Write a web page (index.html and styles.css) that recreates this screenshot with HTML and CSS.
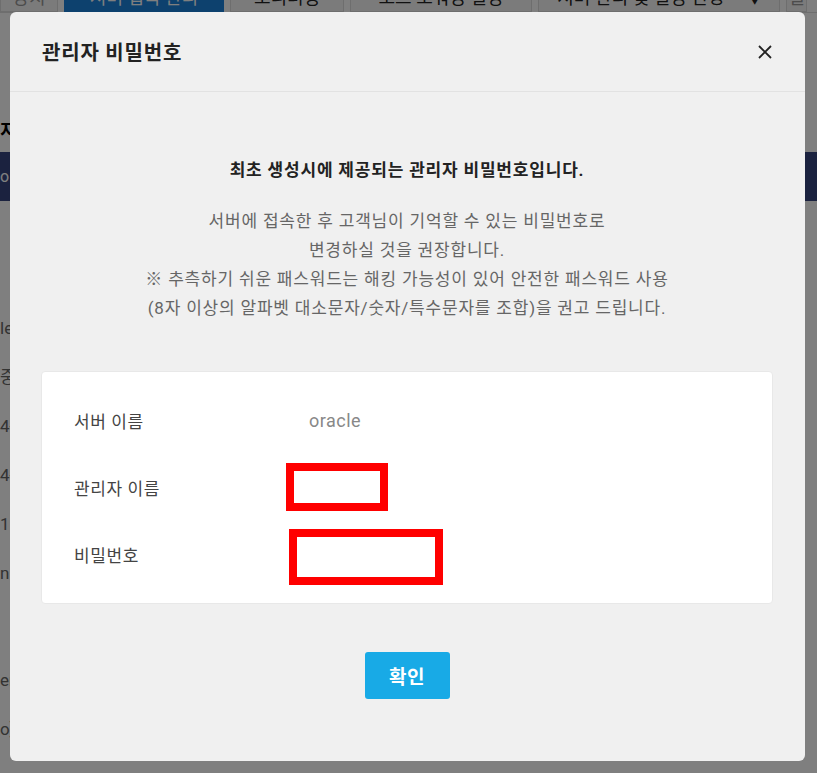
FILE: index.html
```html
<!DOCTYPE html>
<html lang="ko">

<head>
    <meta charset="UTF-8" />
    <meta name="viewport" content="width=device-width, initial-scale=1.0" />
    <title>관리자 비밀번호</title>
    <link rel="stylesheet" href="styles.css">
</head>

<body>
    <!-- page behind the dialog -->
    <div class="page">
        <nav class="tabs">
            <div class="tab tab-first">장치</div>
            <div class="tab active">서버 접속 관리</div>
            <div class="tab tab-mon">모니터링</div>
            <div class="tab tab-port">포트 포워딩 설정</div>
            <div class="tab tab-manage">서버 관리 및 설정 변경 <span class="caret">▼</span></div>
            <div class="tab tab-last">설정</div>
        </nav>
        <div class="page-title"><span class="cursor">지</span></div>
        <div class="navy-bar">o</div>
        <div class="rows">
            <div class="row">le</div>
            <div class="row">중지</div>
            <div class="row">4-</div>
            <div class="row">4-</div>
            <div class="row">1</div>
            <div class="row">n .</div>
            <div class="row row-gap">er.</div>
            <div class="row">o]</div>
        </div>
    </div>

    <div class="overlay">
        <div class="modal">
            <div class="modal-header">
                <h2 class="modal-title">관리자 비밀번호</h2>
                <button class="modal-close" title="닫기">
                    <svg width="16" height="16" viewBox="0 0 16 16">
                        <path d="M2 2 L14 14 M14 2 L2 14" stroke="#222" stroke-width="1.8" fill="none" />
                    </svg>
                </button>
            </div>
            <div class="modal-body">
                <p class="notice-strong">최초 생성시에 제공되는 관리자 비밀번호입니다.</p>
                <p class="notice">
                    서버에 접속한 후 고객님이 기억할 수 있는 비밀번호로<br />
                    변경하실 것을 권장합니다.<br />
                    ※ 추측하기 쉬운 패스워드는 해킹 가능성이 있어 안전한 패스워드 사용<br />
                    (8자 이상의 알파벳 대소문자/숫자/특수문자를 조합)을 권고 드립니다.
                </p>
                <div class="info-box">
                    <div class="info-row">
                        <div class="info-label">서버 이름</div>
                        <div class="info-value">oracle</div>
                    </div>
                    <div class="info-row">
                        <div class="info-label">관리자 이름</div>
                        <div class="info-value"><span class="redact redact-name"></span></div>
                    </div>
                    <div class="info-row">
                        <div class="info-label">비밀번호</div>
                        <div class="info-value"><span class="redact redact-pw"></span></div>
                    </div>
                </div>
                <button class="confirm-btn">확인</button>
            </div>
        </div>
    </div>
</body>

</html>
```

FILE: styles.css
```css
:root {
    --modal-bg: #f0f0f0;
    --text-dark: #222;
    --text-mid: #666;
    --primary: #18aae6;
}

body {
    margin: 0;
    padding: 0;
    font-family: Roboto, "Noto Sans CJK KR", sans-serif;
    background: #fff;
    color: #333;
    overflow: hidden;
}

/* ---- background page ---- */
.page {
    height: 773px;
}

.tabs {
    display: flex;
    margin-top: -18px;
    height: 30px;
    border-bottom: 1px solid #ddd;
    gap: 6px;
    padding-right: 10px;
}

.tab {
    background: #f6f6f6;
    border: 1px solid #ddd;
    color: #222;
    font-size: 18px;
    line-height: 30px;
    text-align: center;
}

.tab-first {
    width: 56px;
    color: #999;
}

.tab.active {
    width: 158px;
    background: #1a82dd;
    color: #fff;
    border-color: #1a82dd;
}

.tab-mon {
    width: 112px;
}

.tab-port {
    width: 180px;
}

.tab-manage {
    width: 240px;
}

.caret {
    font-size: 12px;
    margin-left: 20px;
}

.tab-last {
    flex: 1;
    color: #999;
}

.page-title {
    margin-top: 103px;
    height: 36px;
    font-size: 18px;
    font-weight: bold;
    color: #000;
}

.cursor {
    border-right: 2px solid #e08a00;
    padding-right: 1px;
}

.navy-bar {
    height: 49px;
    background: #36447f;
    color: #fff;
    font-size: 16px;
    line-height: 49px;
    border-bottom: 80px solid #fff;
    box-shadow: 0 81px 0 -80px #ccc;
}

.rows {
    margin-top: 32px;
    font-size: 17px;
    color: #666;
}

.row {
    height: 49px;
    line-height: 30px;
}

.row-gap {
    margin-top: 58px;
}

/* ---- dialog ---- */
.overlay {
    position: fixed;
    top: 0;
    left: 0;
    right: 0;
    bottom: 0;
    background: rgba(0, 0, 0, 0.5);
    display: flex;
    align-items: flex-start;
    padding: 12px 12px 12px 10px;
}

.modal {
    flex: 1;
    background: var(--modal-bg);
    border-radius: 6px;
}

.modal-header {
    display: flex;
    justify-content: space-between;
    align-items: center;
    height: 79px;
    padding: 0 32px;
    border-bottom: 1px solid #e2e2e2;
}

.modal-title {
    margin: 0;
    font-size: 20px;
    letter-spacing: 0.8px;
    font-weight: bold;
    color: var(--text-dark);
}

.modal-close {
    background: none;
    border: none;
    padding: 0;
    width: 16px;
    height: 16px;
    cursor: pointer;
}

.modal-body {
    padding: 66px 32px 62px 31px;
    display: flex;
    flex-direction: column;
    align-items: center;
    text-align: center;
}

.notice-strong {
    margin: 0;
    font-size: 17px;
    letter-spacing: 0.8px;
    line-height: 24px;
    font-weight: bold;
    color: var(--text-dark);
}

.notice {
    margin: 25px 0 48px;
    font-size: 17px;
    letter-spacing: 0.8px;
    line-height: 29px;
    color: var(--text-mid);
}

.info-box {
    align-self: stretch;
    background: #fff;
    border: 1px solid #e8e8e8;
    border-radius: 4px;
    padding: 15px 32px;
    text-align: left;
}

.info-row {
    display: flex;
    align-items: center;
    height: 67px;
}

.info-label {
    width: 235px;
    font-size: 17px;
    letter-spacing: 0.6px;
    color: #444;
}

.info-value {
    font-size: 18px;
    letter-spacing: 0.5px;
    color: #888;
}

.redact {
    display: block;
    border: 8px solid #ff0000;
    background: #fff;
    box-sizing: border-box;
}

.redact-name {
    width: 102px;
    height: 48px;
    margin-left: -23px;
    margin-top: -2px;
}

.redact-pw {
    width: 154px;
    height: 56px;
    margin-left: -20px;
    margin-top: 4px;
}

.confirm-btn {
    margin-top: 48px;
    width: 85px;
    height: 47px;
    border: none;
    border-radius: 3px;
    background: var(--primary);
    color: #fff;
    font-family: inherit;
    font-size: 19px;
    letter-spacing: 0.5px;
    font-weight: bold;
    cursor: pointer;
}
```
